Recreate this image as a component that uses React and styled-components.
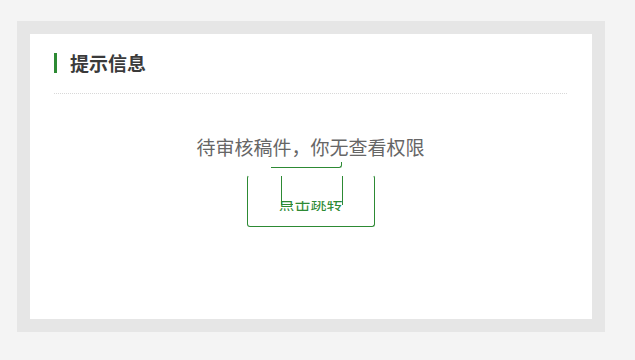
import React from "react";
import styled, { createGlobalStyle } from "styled-components";

const Global = createGlobalStyle`
  html, body { margin: 0; padding: 0; background: #f4f4f4; }
  body { font-family: "Noto Sans CJK SC", "Noto Sans", sans-serif; }
`;

const GREEN = "#2d8a34";

const Frame = styled.div`
  margin: 21px 0 0 17px;
  width: 588px;
  height: 311px;
  box-sizing: border-box;
  padding: 13px;
  background: #e6e6e6;
`;

const Panel = styled.div`
  background: #fff;
  height: 100%;
  box-sizing: border-box;
  padding: 0 25px 0 24px;
`;

const Header = styled.div`
  display: flex;
  align-items: center;
  gap: 13px;
  padding: 19px 0 20px;
  border-bottom: 1px dotted #d8d8d8;
`;

const Bar = styled.span`
  width: 3px;
  height: 20px;
  background: ${GREEN};
`;

const Title = styled.h2`
  margin: 0;
  font-size: 19px;
  line-height: 20px;
  font-weight: 700;
  color: #3a3a3a;
`;

const Body = styled.div`
  display: flex;
  flex-direction: column;
  align-items: center;
  padding-top: 40px;
`;

const Message = styled.p`
  margin: 0;
  font-size: 19px;
  line-height: 26px;
  color: #666;
`;

const Button = styled.a`
  position: relative;
  margin-top: 15px;
  width: 128px;
  height: 52px;
  box-sizing: border-box;
  border: 1px solid ${GREEN};
  border-top-color: transparent;
  border-radius: 3px;
  display: flex;
  align-items: center;
  justify-content: center;
  padding-top: 4px;
  color: ${GREEN};
  font-size: 16px;
  text-decoration: none;
  cursor: pointer;
`;

const Label = styled.span`
  line-height: 16px;
  clip-path: inset(6px 0 0 0);
`;

const GlitchTop = styled.span`
  position: absolute;
  left: 23px;
  top: -14px;
  width: 70px;
  height: 5px;
  border-bottom: 1px solid ${GREEN};
  border-right: 1px solid ${GREEN};
  border-bottom-right-radius: 3px;
`;

const GlitchInner = styled.span`
  position: absolute;
  left: 33px;
  top: 0;
  width: 60px;
  height: 29px;
  border-left: 1px solid ${GREEN};
  border-right: 1px solid ${GREEN};
  &::after {
    content: "";
    position: absolute;
    left: 0;
    bottom: 0;
    width: 11px;
    height: 1px;
    background: ${GREEN};
  }
`;

export default function App() {
  return (
    <>
      <Global />
      <Frame>
        <Panel>
          <Header>
            <Bar />
            <Title>提示信息</Title>
          </Header>
          <Body>
            <Message>待审核稿件，你无查看权限</Message>
            <Button>
              <GlitchTop />
              <GlitchInner />
              <Label>点击跳转</Label>
            </Button>
          </Body>
        </Panel>
      </Frame>
    </>
  );
}
